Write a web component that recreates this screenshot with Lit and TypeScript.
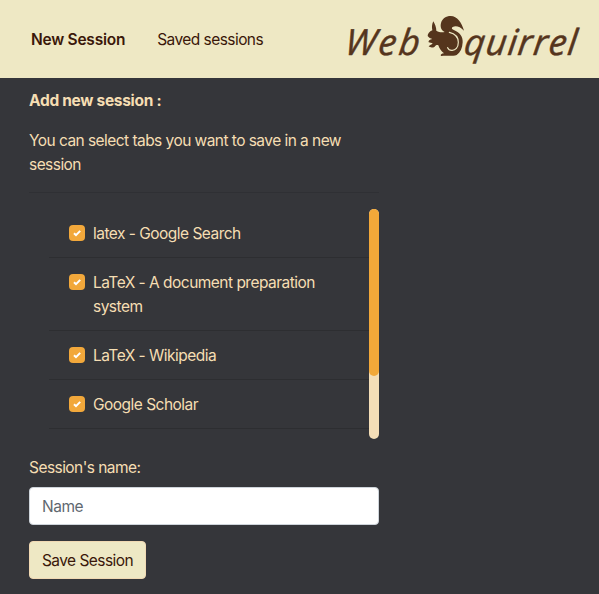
import { LitElement, html, css } from "lit";
import { customElement } from "lit/decorators.js";

@customElement("squirrel-logo")
class SquirrelLogo extends LitElement {
  static styles = css`
    :host { display: block; width: 264px; height: 78px; }
    svg { display: block; }
    .word {
      font-family: "Open Sans", "Noto Sans", sans-serif;
      font-size: 36px;
      font-style: italic;
      font-weight: 500;
      fill: #55351d;
      stroke: #55351d;
      stroke-width: 0.5;
      stroke-linejoin: round;
    }
    .body { fill: #55351d; }
    .line { fill: none; stroke: #eee8c4; stroke-width: 3.5; stroke-linecap: round; }
  `;
  render() {
    return html`<svg width="264" height="78" viewBox="0 0 264 78" role="img" aria-label="Web Squirrel">
      <text class="word" textLength="74" transform="translate(9 54.5) skewX(-7)">Web</text>
      <g transform="scale(.33333)">
        <path class="body" d="M295 64 C300 73 304 82 304 92 C312 97 321 98 329 96 C319 91 315 81 318 69 C322 55 333 48 347 48 C367 49 379 66 387 92 C375 80 363 76 353 81 C348 84 351 88 358 91 C374 98 384 110 383 127 C382 145 376 158 365 165 C354 169 332 166 318 168 C315 164 320 161 327 160 C318 153 313 145 310 136 C306 134 302 135 299 140 C293 144 285 143 281 139 C285 136 290 134 293 130 L281 127 C279 122 284 118 292 117 C287 115 281 113 278 108 C278 101 283 95 292 91 C290 82 291 72 295 64Z"/>
        <path class="line" d="M343 97 C360 101 370 111 370 127 C370 143 361 152 350 151 C344 151 340 148 338 143"/>
      </g>
      <text class="word" textLength="112" transform="translate(128 54.5) skewX(-7)">quirrel</text>
    </svg>`;
  }
}

@customElement("app-root")
class AppRoot extends LitElement {
  static styles = css`
    * { box-sizing: border-box; }
    :host {
      display: block;
      height: 594px;
      overflow: hidden;
      background: #35363a;
      color: #f5deb3;
      font: 400 15.5px/24px Inter, sans-serif;
      letter-spacing: -0.55px;
    }
    header {
      display: flex;
      align-items: center;
      height: 78px;
      background: #eee8c4;
      color: #3a1709;
    }
    nav { display: flex; gap: 32px; padding: 2px 0 0 31px; flex: 1; white-space: nowrap; }
    .current { font-weight: 600; letter-spacing: -0.25px; }
    main { width: 350px; margin: 11px 0 0 29px; }
    h1 { margin: 0 0 16px; font: inherit; font-weight: 700; letter-spacing: -0.3px; }
    p { margin: 0; }
    .rule { height: 1px; margin: 15px 0 16px; background: #2f3034; }
    .tabs { display: flex; height: 230px; overflow: hidden; letter-spacing: -0.52px; }
    ul { flex: 1; list-style: none; margin: 0 0 0 20px; padding: 0; }
    li {
      display: flex;
      gap: 8px;
      padding: 13px 20px 11px;
      border-bottom: 1px solid #2d2e31;
    }
    .box { flex: none; margin-top: 3px; }
    .track { width: 10px; border-radius: 5px; background: #f4deb7; }
    .thumb { height: 167px; border-radius: 5px; background: #f2a839; }
    label { display: block; margin: 17px 0 7px; }
    input {
      display: block;
      width: 350px;
      height: 38px;
      padding: 6px 12px;
      border: 1px solid #ced4da;
      border-radius: 4px;
      background: #fff;
      font: inherit;
      letter-spacing: -0.5px;
    }
    input::placeholder { color: #5f6870; opacity: 1; }
    button {
      display: block;
      width: 117px;
      height: 38px;
      margin-top: 16px;
      padding: 2px 0 0;
      border: 1px solid #f1d9b3;
      border-radius: 4px;
      background: #eee8c4;
      color: #3a1709;
      font: inherit;
      letter-spacing: -0.55px;
    }
  `;
  tabs = ["latex - Google Search", "LaTeX - A document preparation system", "LaTeX - Wikipedia", "Google Scholar"];
  render() {
    return html`
      <header>
        <nav><span class="current">New Session</span><span>Saved sessions</span></nav>
        <squirrel-logo></squirrel-logo>
      </header>
      <main>
        <h1>Add new session :</h1>
        <p>You can select tabs you want to save in a new session</p>
        <div class="rule"></div>
        <div class="tabs">
          <ul>
            ${this.tabs.map(
              (t) => html`<li>
                <svg class="box" width="16" height="16" viewBox="0 0 16 16">
                  <rect width="16" height="16" rx="4" fill="#f2a83b" />
                  <path d="M5 8.2 L7 10.2 L11.2 5.9" fill="none" stroke="#fff" stroke-width="2" />
                </svg>
                <span>${t}</span>
              </li>`
            )}
          </ul>
          <div class="track"><div class="thumb"></div></div>
        </div>
        <label for="name">Session's name:</label>
        <input id="name" placeholder="Name" />
        <button>Save Session</button>
      </main>
    `;
  }
}
